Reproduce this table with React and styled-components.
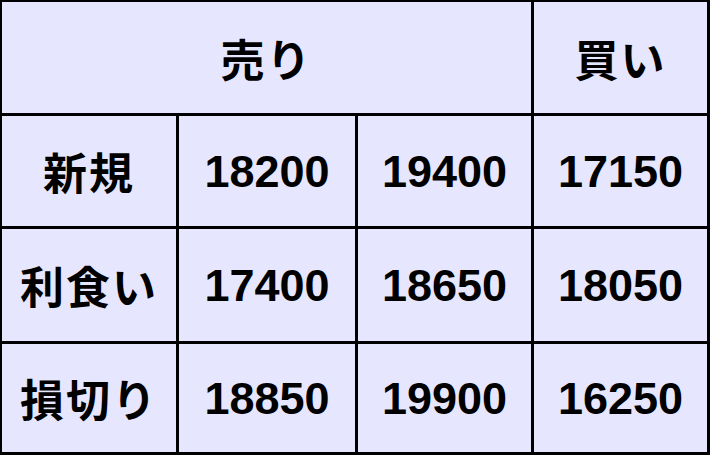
import styled, { createGlobalStyle } from "styled-components";

const Global = createGlobalStyle`
  html, body {
    margin: 0;
    padding: 0;
    background: #ffffff;
  }
`;

const Grid = styled.div`
  width: 710px;
  height: 455px;
  box-sizing: border-box;
  display: grid;
  grid-template-columns: 174px 176px 173px 173px;
  grid-template-rows: 111px 110px 112px 108px;
  gap: 3px;
  padding: 2px 3px 3px 2px;
  background: #000000;
`;

const Cell = styled.div`
  grid-column: ${({ span }) => (span ? `span ${span}` : "auto")};
  background: #e6e6ff;
  display: flex;
  align-items: center;
  justify-content: center;
  color: #000;
  font-family: ${({ num }) =>
    num
      ? `"Liberation Sans", Arial, sans-serif`
      : `"Noto Sans CJK JP", "Noto Sans", sans-serif`};
  font-weight: bold;
  font-size: ${({ num }) => (num ? "45px" : "44px")};
  letter-spacing: ${({ num }) => (num ? "0" : "2px")};
  line-height: 1;
`;

const rows = [
  ["新規", "18200", "19400", "17150"],
  ["利食い", "17400", "18650", "18050"],
  ["損切り", "18850", "19900", "16250"],
];

export default function App() {
  return (
    <>
      <Global />
      <Grid>
        <Cell span={3}>売り</Cell>
        <Cell>買い</Cell>
        {rows.map((r) =>
          r.map((v, i) => (
            <Cell key={r[0] + i} num={i > 0}>
              {v}
            </Cell>
          ))
        )}
      </Grid>
    </>
  );
}
